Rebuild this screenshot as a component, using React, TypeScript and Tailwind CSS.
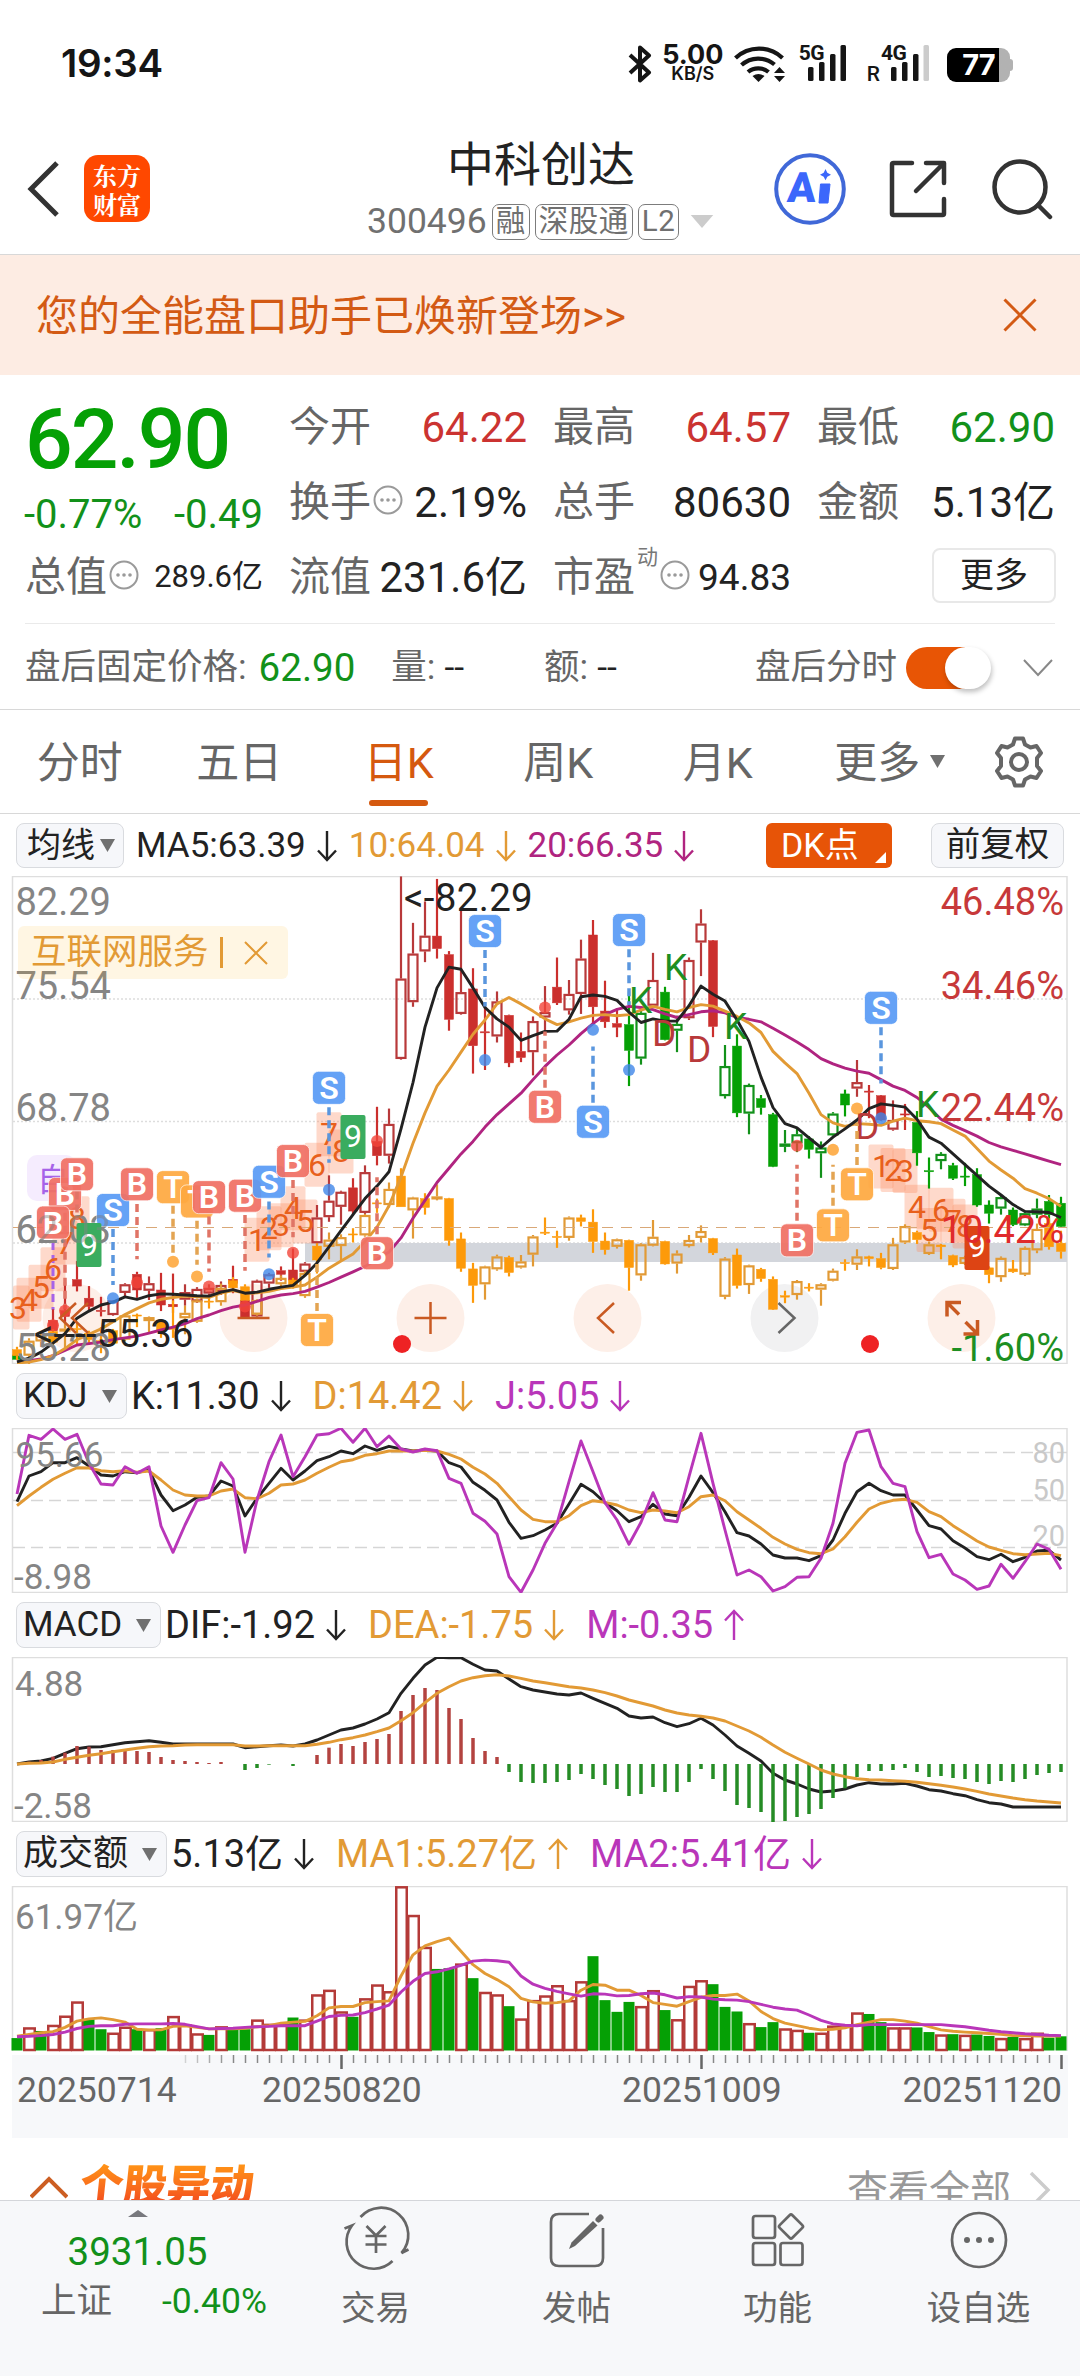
import type { ReactNode } from "react"
import clsx from "clsx"

/* ---------- chart data ---------- */

// one trading day is 12px wide
const dayX = (i: number) => 17 + i * 12
const priceY = (v: number) => 820 + v / 2.8
const indicatorY = (v: number) => 1360 + v / 3
const volumeY = (v: number) => 1820 + v / 2.82

// r / g / a: hollow red, green, amber. Upper case: filled
type Kind = "r" | "R" | "g" | "G" | "a" | "A"
// day, high, body top, body bottom, low
type Candle = [number, number, number, number, number, Kind]

const candleColors: Record<string, string> = { r: "#b8393a", R: "#cb2f2d", g: "#12911a", G: "#05a005", a: "#e29a35", A: "#fd9a0a" }

const sectorCandles: Candle[] = [
  [0, 1475, 1483, 1500, 1512, "A"], [1, 1451, 1458, 1500, 1525, "a"], [2, 1435, 1442, 1460, 1475, "a"],
  [3, 1425, 1432, 1462, 1470, "A"], [4, 1405, 1424, 1426, 1480, "a"], [5, 1405, 1424, 1426, 1470, "A"],
  [6, 1430, 1437, 1455, 1470, "A"], [7, 1420, 1458, 1462, 1493, "A"], [8, 1425, 1430, 1465, 1470, "A"],
  [9, 1385, 1387, 1455, 1460, "a"], [10, 1382, 1386, 1389, 1420, "A"], [11, 1390, 1392, 1403, 1435, "a"],
  [12, 1398, 1402, 1432, 1450, "A"], [13, 1345, 1422, 1426, 1450, "A"], [14, 1360, 1380, 1395, 1440, "a"],
  [15, 1340, 1345, 1405, 1408, "a"], [16, 1335, 1347, 1350, 1368, "A"], [17, 1298, 1310, 1350, 1360, "a"],
  [18, 1280, 1290, 1310, 1318, "A"], [19, 1300, 1307, 1345, 1345, "A"], [20, 1342, 1344, 1385, 1388, "a"],
  [22, 1275, 1282, 1300, 1305, "a"], [23, 1282, 1288, 1303, 1312, "A"], [24, 1262, 1268, 1333, 1338, "a"],
  [25, 1185, 1193, 1232, 1270, "A"], [26, 1155, 1175, 1195, 1230, "a"], [27, 1160, 1168, 1193, 1235, "a"],
  [28, 1143, 1159, 1162, 1183, "A"], [29, 1103, 1106, 1163, 1168, "a"], [30, 1060, 1072, 1075, 1100, "A"],
  [31, 1015, 1033, 1078, 1085, "a"], [32, 975, 997, 1083, 1083, "A"], [33, 1055, 1057, 1093, 1172, "a"],
  [34, 1045, 1060, 1085, 1105, "A"], [35, 1020, 1054, 1061, 1065, "a"], [36, 1058, 1060, 1177, 1192, "A"],
  [37, 1155, 1173, 1255, 1265, "A"], [38, 1240, 1257, 1303, 1352, "A"], [39, 1248, 1250, 1300, 1343, "a"],
  [40, 1217, 1222, 1258, 1262, "a"], [41, 1220, 1225, 1267, 1278, "A"], [42, 1218, 1236, 1253, 1256, "a"],
  [43, 1162, 1166, 1217, 1250, "a"], [44, 1113, 1154, 1157, 1162, "A"], [45, 1150, 1166, 1169, 1198, "A"],
  [46, 1110, 1113, 1170, 1178, "a"], [47, 1105, 1114, 1124, 1138, "A"], [48, 1090, 1126, 1180, 1212, "A"],
  [49, 1155, 1179, 1203, 1217, "A"], [50, 1172, 1174, 1195, 1200, "a"], [51, 1175, 1177, 1253, 1318, "A"],
  [52, 1185, 1188, 1275, 1290, "a"], [53, 1120, 1167, 1192, 1194, "a"], [54, 1178, 1180, 1243, 1245, "A"],
  [55, 1205, 1214, 1242, 1270, "a"], [56, 1162, 1176, 1193, 1197, "a"], [57, 1135, 1151, 1170, 1183, "a"],
  [58, 1170, 1172, 1212, 1218, "A"], [59, 1224, 1228, 1335, 1342, "a"], [60, 1200, 1218, 1303, 1312, "A"],
  [61, 1245, 1247, 1302, 1327, "a"], [62, 1254, 1258, 1284, 1293, "A"], [63, 1278, 1286, 1370, 1372, "A"],
  [64, 1318, 1332, 1336, 1353, "A"], [65, 1288, 1291, 1330, 1343, "a"], [66, 1297, 1308, 1311, 1320, "A"],
  [67, 1297, 1300, 1315, 1360, "a"], [68, 1256, 1262, 1290, 1292, "a"], [69, 1230, 1239, 1242, 1262, "A"],
  [70, 1202, 1222, 1245, 1260, "a"], [71, 1220, 1223, 1228, 1250, "A"], [72, 1212, 1228, 1253, 1258, "A"],
  [73, 1170, 1188, 1257, 1260, "a"], [74, 1132, 1137, 1183, 1187, "a"], [75, 1150, 1155, 1175, 1187, "A"],
  [76, 1180, 1188, 1215, 1218, "a"], [77, 1187, 1190, 1195, 1230, "A"], [78, 1217, 1220, 1246, 1252, "A"],
  [79, 1220, 1224, 1243, 1246, "a"], [81, 1250, 1254, 1273, 1297, "A"], [82, 1222, 1226, 1280, 1293, "a"],
  [83, 1232, 1257, 1265, 1268, "A"], [84, 1194, 1198, 1273, 1277, "a"], [85, 1130, 1145, 1205, 1213, "a"],
  [86, 1115, 1130, 1195, 1203, "A"], [87, 1150, 1185, 1208, 1228, "A"],
]

const stockCandles: Candle[] = [
  [0, 1496, 1498, 1510, 1512, "G"], [3, 1370, 1401, 1430, 1440, "R"], [4, 1293, 1374, 1390, 1410, "R"],
  [5, 1235, 1287, 1305, 1320, "R"], [6, 1305, 1339, 1362, 1372, "R"], [7, 1335, 1373, 1376, 1390, "R"],
  [8, 1344, 1345, 1386, 1388, "r"], [9, 1297, 1300, 1324, 1335, "r"], [10, 1265, 1272, 1316, 1338, "R"],
  [11, 1278, 1297, 1318, 1344, "r"], [12, 1268, 1316, 1358, 1375, "R"], [13, 1270, 1356, 1363, 1380, "R"],
  [14, 1300, 1322, 1343, 1360, "r"], [15, 1308, 1313, 1348, 1352, "r"], [16, 1300, 1310, 1326, 1340, "r"],
  [17, 1292, 1302, 1322, 1330, "r"], [18, 1248, 1286, 1298, 1325, "R"], [19, 1345, 1345, 1393, 1393, "R"],
  [20, 1287, 1290, 1390, 1392, "r"], [21, 1268, 1272, 1298, 1310, "r"], [22, 1250, 1262, 1272, 1290, "R"],
  [23, 1200, 1260, 1288, 1300, "R"], [24, 1238, 1242, 1265, 1267, "r"], [25, 1078, 1113, 1185, 1190, "r"],
  [26, 995, 1066, 1112, 1125, "r"], [27, 1038, 1041, 1083, 1133, "r"], [28, 1003, 1030, 1095, 1105, "R"],
  [29, 967, 986, 1100, 1103, "r"], [30, 803, 900, 940, 967, "R"], [31, 808, 851, 940, 962, "r"],
  [32, 158, 444, 669, 671, "r"], [33, 288, 374, 510, 523, "r"], [34, 228, 324, 368, 398, "r"],
  [35, 165, 325, 360, 388, "R"], [36, 367, 377, 558, 590, "R"], [37, 245, 482, 543, 545, "r"],
  [38, 415, 473, 632, 710, "R"], [39, 520, 593, 596, 700, "R"], [40, 480, 508, 606, 623, "r"],
  [41, 545, 547, 680, 692, "R"], [42, 595, 648, 665, 678, "R"], [43, 550, 563, 650, 715, "r"],
  [44, 465, 538, 553, 600, "r"], [45, 385, 468, 512, 518, "R"], [46, 448, 487, 533, 545, "r"],
  [47, 335, 388, 487, 543, "r"], [48, 280, 322, 523, 570, "R"], [49, 450, 535, 565, 582, "R"],
  [50, 530, 570, 580, 608, "R"], [51, 480, 573, 645, 745, "G"], [52, 530, 540, 668, 685, "g"],
  [53, 372, 448, 520, 522, "r"], [54, 467, 482, 615, 617, "G"], [55, 548, 571, 590, 650, "g"],
  [56, 385, 392, 555, 560, "r"], [57, 250, 290, 343, 437, "r"], [58, 336, 338, 578, 608, "R"],
  [59, 630, 689, 773, 780, "g"], [60, 600, 633, 820, 832, "G"], [61, 738, 742, 822, 880, "g"],
  [62, 770, 780, 805, 825, "G"], [63, 820, 825, 970, 972, "G"], [64, 868, 906, 915, 930, "g"],
  [65, 865, 880, 905, 930, "g"], [66, 885, 893, 922, 948, "G"], [67, 900, 917, 933, 1002, "g"],
  [68, 818, 822, 883, 885, "g"], [69, 755, 767, 798, 830, "G"], [70, 672, 734, 752, 775, "r"],
  [71, 742, 759, 762, 835, "R"], [72, 770, 772, 840, 842, "R"], [73, 785, 840, 867, 870, "r"],
  [74, 795, 823, 826, 868, "R"], [75, 815, 847, 932, 968, "G"], [76, 945, 982, 985, 1032, "G"],
  [77, 930, 935, 955, 978, "g"], [78, 960, 968, 1003, 1008, "G"], [79, 960, 997, 1000, 1025, "G"],
  [80, 975, 993, 1078, 1083, "G"], [81, 1065, 1078, 1101, 1130, "G"], [82, 1050, 1056, 1088, 1105, "g"],
  [83, 1085, 1092, 1133, 1137, "G"], [84, 1098, 1101, 1135, 1137, "g"], [85, 1060, 1088, 1105, 1115, "g"],
  [86, 1050, 1068, 1105, 1130, "G"], [87, 1055, 1073, 1138, 1140, "G"],
]

const ma5 = [
  1517, 1507, 1490, 1465, 1438, 1395, 1375, 1358, 1350, 1335, 1342, 1332, 1327, 1328, 1330, 1332, 1333, 1322, 1315, 1325,
  1322, 1314, 1308, 1303, 1275, 1240, 1195, 1150, 1105, 1060, 1025, 985, 865, 735, 580, 470, 412, 418, 470, 525,
  557, 580, 617, 604, 592, 591, 558, 495, 490, 494, 505, 538, 567, 557, 563, 563, 520, 465, 488, 507,
  560, 620, 720, 805, 850, 862, 890, 917, 888, 865, 840, 808, 795, 799, 804, 838, 888, 905, 935, 965,
  995, 1025, 1050, 1077, 1096, 1097, 1099, 1113,
]
const ma10 = [
  1520, 1518, 1511, 1500, 1480, 1455, 1440, 1425, 1405, 1385, 1368, 1352, 1342, 1337, 1333, 1335, 1337, 1325, 1318, 1325,
  1324, 1320, 1312, 1308, 1302, 1280, 1255, 1235, 1215, 1180, 1140, 1080, 1000, 905, 820, 745, 700, 650, 600, 560,
  515, 497, 515, 535, 557, 573, 565, 555, 547, 545, 548, 545, 532, 522, 530, 537, 525, 517, 521, 535,
  550, 568, 595, 648, 680, 710, 765, 825, 848, 858, 850, 852, 855, 843, 835, 842, 845, 850, 868, 885,
  920, 955, 980, 1003, 1032, 1045, 1060, 1082,
]
const ma20 = [
  1518, 1514, 1509, 1500, 1485, 1470, 1466, 1462, 1455, 1450, 1445, 1437, 1428, 1420, 1410, 1396, 1386, 1374, 1364, 1358,
  1348, 1337, 1330, 1326, 1320, 1308, 1295, 1280, 1265, 1250, 1230, 1210, 1170, 1115, 1065, 1015, 975, 935, 900, 860,
  825, 795, 765, 727, 690, 658, 630, 598, 570, 545, 530, 522, 525, 531, 543, 553, 545, 537, 534, 540,
  553, 558, 565, 583, 602, 622, 643, 668, 683, 695, 703, 709, 727, 745, 757, 777, 805, 838, 855, 870,
  885, 903, 915, 925, 935, 945, 955, 965,
]

const kLine = [
  425, 348, 335, 308, 308, 293, 318, 345, 348, 335, 338, 330, 405, 452, 435, 412, 408, 363, 378, 468,
  415, 370, 325, 360, 333, 302, 290, 273, 281, 258, 271, 259, 267, 273, 270, 273, 308, 321, 367, 391,
  420, 487, 535, 527, 510, 490, 432, 373, 395, 428, 452, 485, 470, 433, 462, 467, 412, 348, 398, 455,
  518, 528, 552, 585, 594, 594, 602, 587, 540, 460, 395, 370, 392, 405, 405, 450, 497, 507, 542, 564,
  590, 599, 583, 605, 592, 573, 571, 600,
]
const dLine = [
  437, 408, 382, 358, 340, 323, 324, 332, 335, 332, 337, 333, 360, 390, 405, 408, 408, 393, 387, 413,
  416, 400, 375, 372, 360, 340, 322, 305, 299, 286, 281, 273, 273, 273, 271, 273, 283, 297, 322, 342,
  370, 410, 450, 478, 485, 485, 467, 437, 422, 427, 435, 450, 458, 450, 453, 458, 440, 410, 405, 422,
  455, 480, 505, 532, 552, 568, 578, 581, 567, 530, 487, 447, 430, 421, 418, 427, 455, 470, 497, 520,
  543, 561, 571, 581, 584, 582, 580, 587,
]
const jLine = [
  402, 226, 238, 207, 238, 223, 310, 372, 375, 320, 340, 320, 498, 577, 495, 422, 413, 308, 357, 577,
  420, 305, 225, 350, 290, 225, 221, 205, 247, 205, 260, 228, 267, 276, 267, 272, 355, 370, 460, 484,
  522, 650, 697, 630, 550, 490, 365, 243, 335, 428, 480, 553, 487, 398, 480, 485, 350, 220, 370, 510,
  645, 630, 650, 693, 680, 652, 650, 595, 490, 310, 217, 210, 320, 370, 380, 515, 593, 583, 642, 660,
  688, 678, 613, 655, 605, 552, 568, 628,
]

const difLine = [
  1212, 1206, 1203, 1195, 1180, 1166, 1161, 1160, 1154, 1148, 1145, 1142, 1147, 1152, 1152, 1152, 1152, 1152, 1152, 1163,
  1160, 1157, 1155, 1158, 1152, 1140, 1125, 1110, 1104, 1092, 1077, 1058, 1000, 955, 915, 892, 893, 893, 913, 930,
  933, 957, 980, 990, 996, 1002, 1005, 999, 1015, 1030, 1045, 1068, 1074, 1071, 1088, 1100, 1091, 1075, 1095, 1125,
  1158, 1180, 1203, 1240, 1260, 1272, 1287, 1296, 1293, 1287, 1275, 1268, 1272, 1272, 1270, 1278, 1289, 1293, 1301, 1307,
  1319, 1328, 1332, 1341, 1341, 1341, 1341, 1341,
]
const deaLine = [
  1212, 1210, 1209, 1206, 1198, 1192, 1186, 1181, 1175, 1170, 1165, 1160, 1158, 1157, 1155, 1154, 1154, 1154, 1154, 1158,
  1158, 1157, 1157, 1157, 1157, 1153, 1147, 1139, 1133, 1125, 1115, 1104, 1082, 1058, 1028, 1000, 980, 963, 953, 947,
  944, 948, 955, 963, 968, 974, 980, 984, 990, 998, 1008, 1020, 1029, 1038, 1050, 1059, 1065, 1069, 1074, 1083,
  1098, 1113, 1132, 1155, 1177, 1195, 1212, 1230, 1242, 1250, 1256, 1259, 1260, 1262, 1264, 1267, 1271, 1276, 1281, 1287,
  1294, 1302, 1308, 1314, 1319, 1323, 1326, 1329,
]
const MACD_ZERO = 1212
const macdBars = [
  1212, 1205, 1200, 1190, 1178, 1158, 1160, 1170, 1170, 1170, 1173, 1176, 1191, 1200, 1203, 1206, 1209, 1206, 1212, 1230,
  1224, 1214, 1212, 1218, 1212, 1185, 1163, 1152, 1158, 1146, 1137, 1122, 1053, 1005, 984, 990, 1044, 1077, 1134, 1173,
  1191, 1236, 1266, 1269, 1269, 1266, 1260, 1242, 1257, 1275, 1287, 1308, 1302, 1281, 1296, 1296, 1266, 1227, 1257, 1293,
  1335, 1344, 1356, 1386, 1383, 1371, 1362, 1347, 1314, 1285, 1251, 1233, 1233, 1230, 1224, 1236, 1251, 1248, 1254, 1257,
  1266, 1272, 1263, 1266, 1257, 1245, 1239, 1236,
]

const VOLUME_ZERO = 650
const volumeBars = [
  615, 585, 595, 578, 552, 512, 562, 590, 600, 583, 590, 590, 587, 553, 577, 602, 606, 582, 592, 590,
  563, 575, 575, 557, 563, 492, 479, 540, 555, 503, 464, 483, 187, 268, 358, 420, 418, 405, 446, 485,
  492, 525, 560, 508, 495, 466, 508, 455, 384, 508, 541, 513, 525, 480, 536, 562, 468, 452, 463, 527,
  540, 573, 584, 570, 588, 592, 600, 600, 580, 577, 543, 547, 570, 585, 585, 585, 598, 605, 604, 606,
  605, 609, 615, 612, 615, 600, 614, 610,
]
const volumeKinds = "grgrrrggrrgrgrrrgrggrrrgrrrrgrrrrrrggrgrrgrrrrrrggggrrgrrrgggrggrrgrrrrggrrggrgrggrgrrgg"
const volMa1 = [
  610, 605, 600, 597, 585, 567, 561, 558, 563, 570, 590, 592, 592, 582, 580, 585, 589, 589, 589, 587,
  583, 580, 573, 570, 568, 552, 530, 526, 526, 515, 512, 510, 440, 380, 355, 343, 333, 370, 408, 433,
  450, 470, 503, 513, 517, 515, 510, 480, 464, 466, 480, 480, 495, 515, 520, 525, 512, 500, 495, 495,
  491, 510, 540, 560, 573, 580, 587, 592, 590, 586, 577, 570, 563, 563, 567, 573, 583, 592, 596, 598,
  600, 602, 604, 608, 608, 609, 609, 609,
]
const volMa2 = [
  611, 610, 608, 605, 598, 588, 582, 580, 580, 576, 575, 575, 575, 574, 576, 583, 589, 588, 587, 585,
  583, 582, 580, 580, 580, 567, 554, 551, 550, 543, 533, 522, 485, 455, 433, 428, 420, 410, 398, 395,
  397, 401, 440, 463, 475, 483, 490, 497, 490, 491, 496, 495, 490, 488, 493, 502, 498, 499, 505, 507,
  508, 512, 520, 528, 533, 536, 550, 565, 575, 579, 580, 577, 577, 577, 577, 577, 577, 577, 580, 583,
  588, 593, 597, 600, 603, 605, 607, 608,
]

// buy / sell / T+0 marks: day, badge centre, dash start, dash end, dot
type Mark = { kind: "B" | "S" | "T"; day: number; y: number; dash?: [number, number]; dot?: number }

const marks: Mark[] = [
  { kind: "B", day: 4, y: 1047, dash: [1100, 1370], dot: 1374 },
  { kind: "B", day: 3, y: 1127, dot: 1415 },
  { kind: "B", day: 5, y: 992, dash: [1040, 1120] },
  { kind: "S", day: 8, y: 1092, dash: [1145, 1302], dot: 1339 },
  { kind: "B", day: 10, y: 1020, dash: [1075, 1230], dot: 1295 },
  { kind: "T", day: 13, y: 1028, dash: [1080, 1212], dot: 1237 },
  { kind: "T", day: 15, y: 1068, dash: [1122, 1245], dot: 1278 },
  { kind: "B", day: 16, y: 1056, dash: [1110, 1265], dot: 1306 },
  { kind: "B", day: 19, y: 1052, dash: [1106, 1262], dot: 1362 },
  { kind: "S", day: 21, y: 1013, dash: [1068, 1225], dot: 1272 },
  { kind: "B", day: 23, y: 955, dash: [1008, 1168], dot: 1212 },
  { kind: "S", day: 26, y: 750, dash: [804, 960], dot: 1035 },
  { kind: "B", day: 30, y: 1213, dash: [1160, 1000], dot: 899 },
  { kind: "T", day: 25, y: 1428, dash: [1375, 1240] },
  { kind: "S", day: 39, y: 311, dash: [364, 522], dot: 672 },
  { kind: "B", day: 44, y: 803, dash: [750, 592], dot: 525 },
  { kind: "S", day: 48, y: 845, dash: [792, 634], dot: 587 },
  { kind: "S", day: 51, y: 308, dash: [362, 518], dot: 700 },
  { kind: "B", day: 65, y: 1177, dash: [1122, 965], dot: 912 },
  { kind: "T", day: 68, y: 1135, dash: [1080, 965], dot: 923 },
  { kind: "T", day: 70, y: 1020, dash: [966, 850], dot: 808 },
  { kind: "S", day: 72, y: 526, dash: [580, 738], dot: 835 },
]

const markColors = {
  B: { badge: "#f17165", dash: "#e07466", dot: "#f2453a" },
  S: { badge: "#5a9cf6", dash: "#5a96de", dot: "#3f86e8" },
  T: { badge: "#fea941", dash: "#e3a452", dot: "#fe9d27" },
}

// nine-turn sequence: day, digit, centre
const sequence: [number, number, number][] = [
  [0, 3, 1365], [1, 4, 1343], [2, 5, 1307], [3, 6, 1258], [4, 7, 1183], [5, 8, 1115],
  [20, 1, 1175], [21, 2, 1143], [22, 3, 1135], [23, 4, 1087], [24, 5, 1124], [25, 6, 965], [26, 7, 880], [27, 8, 928],
  [72, 1, 970], [73, 2, 980], [74, 3, 983], [75, 4, 1083], [76, 5, 1148], [77, 6, 1091], [78, 7, 1122], [79, 8, 1138],
]

const toPoints = (values: number[], scale: (v: number) => number) =>
  values.map((v, i) => `${dayX(i)},${scale(v).toFixed(1)}`).join(" ")

/* ---------- small pieces ---------- */

function Line({ values, scale, color }: { values: number[]; scale: (v: number) => number; color: string }) {
  return <polyline points={toPoints(values, scale)} fill="none" stroke={color} strokeWidth="2.900" strokeLinejoin="round" />
}

function CandleShape({ candle }: { candle: Candle }) {
  const [day, high, top, bottom, low, kind] = candle
  const x = dayX(day)
  const color = candleColors[kind]
  const hollow = kind === kind.toLowerCase()
  const y1 = priceY(top)
  const y2 = priceY(bottom)
  return (
    <g stroke={color} strokeWidth="2.200">
      {top > high && <path d={`M${x} ${priceY(high)}V${y1}`} />}
      {low > bottom && <path d={`M${x} ${y2}V${priceY(low)}`} />}
      {hollow ? (
        <rect x={x - 4.5} y={y1 + 1} width="9" height={Math.max(y2 - y1 - 2, 1)} fill="none" />
      ) : (
        <rect x={x - 4.5} y={y1} width="9" height={Math.max(y2 - y1, 1)} fill={color} strokeWidth="0.5" />
      )}
    </g>
  )
}

function Badge({ mark }: { mark: Mark }) {
  const x = dayX(mark.day)
  const y = priceY(mark.y)
  const colors = markColors[mark.kind]
  return (
    <g>
      {mark.dash && (
        <path
          d={`M${x} ${priceY(mark.dash[0])}V${priceY(mark.dash[1])}`}
          stroke={colors.dash}
          strokeWidth="3.5"
          strokeDasharray="8 5"
        />
      )}
      {mark.dot && <circle cx={x} cy={priceY(mark.dot)} r="6" fill={colors.dot} opacity="0.8" />}
      <rect x={x - 16.5} y={y - 16.5} width="33" height="33" rx="6" fill={colors.badge} stroke="#fff" strokeOpacity="0.7" opacity="0.93" />
      <text x={x} y={y + 11} fontSize="32" fontWeight="600" textAnchor="middle" fill="#fff">
        {mark.kind}
      </text>
    </g>
  )
}

function Caret({ className }: { className?: string }) {
  return (
    <svg viewBox="0 0 15 13" className={clsx("h-[13px] w-[15px] shrink-0", className)} fill="currentColor">
      <path d="M0 0h15L7.5 13z" />
    </svg>
  )
}

function Trend({ up }: { up?: boolean }) {
  return (
    <svg viewBox="0 0 20 32" className="h-8 w-5 shrink-0" fill="none" stroke="currentColor" strokeWidth="2.400">
      {up ? <path d="M10 31V2M1 11.500l9-9.500 9 9.500" /> : <path d="M10 1v29M1 20.500l9 9.500 9-9.500" />}
    </svg>
  )
}

function InfoDot() {
  return (
    <svg viewBox="0 0 30 30" className="h-[30px] w-[30px] shrink-0 text-[#9a9a9a]" fill="none" stroke="currentColor" strokeWidth="2">
      <circle cx="15" cy="15" r="13.500" />
      <g fill="currentColor" stroke="none">
        <circle cx="9" cy="15" r="1.800" />
        <circle cx="15" cy="15" r="1.800" />
        <circle cx="21" cy="15" r="1.800" />
      </g>
    </svg>
  )
}

function Reading({ label, color, up }: { label: string; color: string; up?: boolean }) {
  return (
    <span className={clsx("flex items-center gap-[11px]", color)}>
      {label}
      <Trend up={up} />
    </span>
  )
}

function IndicatorBar({ name, width, children }: { name: string; width: string; children: ReactNode }) {
  return (
    <div className="flex h-16 items-center pl-4 text-[38px]">
      <div className={clsx("flex h-[46px] items-center justify-between rounded-lg border border-[#d9dbdf] bg-[#f6f7fa] pr-[9px] pl-1.5 text-[35px] text-[#222]", width)}>
        {name}
        <Caret className="text-[#707070]" />
      </div>
      <div className="ml-1 flex gap-[22px]">{children}</div>
    </div>
  )
}

/* ---------- page sections ---------- */

function SignalBars({ weak }: { weak?: boolean }) {
  return (
    <svg viewBox="0 0 39 37" className="h-[37px] w-[39px]" fill="#151515">
      <rect x="0" y="23" width="5.500" height="14" rx="1.500" />
      <rect x="11" y="18" width="5.500" height="19" rx="1.500" />
      <rect x="22" y="10" width="5.500" height="27" rx="1.500" />
      <rect x="32.500" y="1" width="5.500" height="36" rx="1.500" fill={weak ? "#ccc" : "#151515"} />
    </svg>
  )
}

function StatusBar() {
  return (
    <div className="flex h-[127px] items-center justify-between pr-[67px] pl-[61px] font-['Inter'] font-semibold text-[#151515]">
      <span className="text-[38.5px] tracking-[-0.3px]">19:34</span>
      <div className="flex h-[38px] items-end">
        <svg viewBox="0 0 24 38" className="h-[38px] w-6" fill="none" stroke="currentColor" strokeWidth="4" strokeLinejoin="round">
          <path d="M2 10l19 17.500L12 35.500V2.500l9 8L2 28" />
        </svg>
        <div className="ml-[11px] flex w-[60px] flex-col items-center">
          <span className="text-[27px] leading-[20px] font-bold">5.00</span>
          <span className="text-[18px] leading-[18px]">KB/S</span>
        </div>
        <svg viewBox="0 0 52 38" className="ml-[11px] h-[38px] w-[52px]" fill="none" stroke="currentColor" strokeWidth="4.200">
          <path d="M1.500 13a34 34 0 0 1 47 0M7.500 20a25 25 0 0 1 33-.5M14 27a16 16 0 0 1 20.500 0" />
          <path d="M18.500 31q6-4 12 0L24.500 37z" fill="currentColor" stroke="none" />
          <path d="M40 28l5.500-6 5.500 6zM40 31l5.500 6 5.500-6z" fill="currentColor" stroke="none" />
        </svg>
        <div className="relative ml-[22px] pb-0.5">
          <SignalBars />
          <span className="absolute -top-px -left-[9px] font-['Roboto'] text-[21px] leading-none font-bold tracking-tight">5G</span>
        </div>
        <span className="ml-[20px] font-['Roboto'] text-[21px] leading-[17px] font-medium">R</span>
        <div className="relative ml-[11px] pb-0.5">
          <SignalBars weak />
          <span className="absolute -top-px -left-[10px] font-['Roboto'] text-[21px] leading-none font-bold tracking-tight">4G</span>
        </div>
        <div className="mb-px ml-[17px] flex items-center">
          <div className="flex h-[34px] w-[63px] items-center justify-center rounded-[9px] bg-linear-to-r from-black from-82% to-[#b2b2b2] to-82% text-[29px] font-bold tracking-[-1px] text-white">
            77
          </div>
          <div className="h-3 w-[3px] rounded-r-full bg-[#b2b2b2]" />
        </div>
      </div>
    </div>
  )
}

const tags = ["融", "深股通", "L2"]

function TitleBar() {
  return (
    <header className="relative flex h-32 items-center border-b border-[#d8d8d8] pb-1 text-[#333]">
      <svg viewBox="0 0 34 56" className="ml-[26px] h-14 w-[34px]" fill="none" stroke="currentColor" strokeWidth="5">
        <path d="M31 2L5 28l26 26" />
      </svg>
      <div className="ml-6 flex h-[67px] w-[66px] flex-col items-center justify-center rounded-[14px] bg-[#ff4800] font-['Noto_Serif_CJK_SC','Noto_Sans_CJK_SC',serif] text-[24px] leading-[29px] font-bold text-white">
        <span>东方</span>
        <span>财富</span>
      </div>
      <div className="ml-[217px] flex w-[341px] flex-col items-start pt-1">
        <h1 className="ml-[80px] text-[47px] leading-[62px] text-[#222]">中科创达</h1>
        <div className="flex h-[52px] items-center gap-[5px] text-[35.5px] whitespace-nowrap text-[#707070]">
          <span>300496</span>
          {tags.map((tag) => (
            <span
              key={tag}
              className="flex h-9 shrink-0 items-center rounded-[7px] border border-[#7c7c7c] px-[3px] text-[29.500px] leading-none tracking-[0.5px]"
            >
              {tag}
            </span>
          ))}
          <Caret className="ml-[7px] w-[22px] scale-x-150 text-[#ccc]" />
        </div>
      </div>
      <div className="ml-auto flex items-center pr-[27px]">
        <svg viewBox="0 0 72 72" className="h-[72px] w-[72px]" fill="none">
          <circle cx="36" cy="36" r="33.800" stroke="#4068d8" strokeWidth="4" />
          <text x="13" y="49.500" fontSize="42" fontWeight="900" fill="#3b67fb" transform="skewX(-4) translate(3 0)">
            A
          </text>
          <path d="M46.500 31h9.500l-2 19h-9z" fill="#3b67fb" stroke="#3b67fb" strokeLinejoin="round" />
          <path d="M51.500 16l1.800 3.700 3.700 2-3.700 2-1.800 3.600-1.800-3.600-3.700-2 3.700-2z" fill="#3b67fb" />
        </svg>
        <svg viewBox="0 0 60 60" className="ml-[42px] h-[60px] w-[60px]" fill="none" stroke="currentColor" strokeWidth="4.500" strokeLinecap="round" strokeLinejoin="round">
          <path d="M24 4H5.500Q4 4 4 5.500v49Q4 56 5.500 56h49q1.500 0 1.500-1.500V40M38 4h18v20M55 5L28 32" />
        </svg>
        <svg viewBox="0 0 62 64" className="ml-[43px] h-16 w-[62px]" fill="none" stroke="currentColor" strokeWidth="4.500">
          <circle cx="29" cy="30" r="25.500" />
          <path d="M47 48l12 12" strokeLinecap="round" />
        </svg>
      </div>
    </header>
  )
}

type Cell = { label: string; value: string; color?: string; info?: boolean; sup?: string; size?: string }

const quoteRows: Cell[][] = [
  [
    { label: "今开", value: "64.22", color: "text-[#cb3331]" },
    { label: "最高", value: "64.57", color: "text-[#cb3331]" },
    { label: "最低", value: "62.90", color: "text-[#12911a]" },
  ],
  [
    { label: "换手", value: "2.19%", info: true },
    { label: "总手", value: "80630" },
    { label: "金额", value: "5.13亿" },
  ],
]

const bottomCells: Cell[] = [
  { label: "总值", value: "289.6亿", info: true, size: "text-[31px]" },
  { label: "流值", value: "231.6亿" },
  { label: "市盈", value: "94.83", info: true, sup: "动", size: "text-[37px]" },
]

function QuoteCell({ cell }: { cell: Cell }) {
  return (
    <div className="flex h-[75px] items-center whitespace-nowrap">
      <span className="text-[41px] text-[#666]">{cell.label}</span>
      {cell.sup && <span className="ml-0.5 self-start pt-[2px] text-[21px] leading-[30px] text-[#777]">{cell.sup}</span>}
      {cell.info && <span className="ml-[2px] pb-1.5"><InfoDot /></span>}
      <span className={clsx("ml-auto", cell.color ?? "text-[#222]", cell.size ?? "text-[42px]")}>{cell.value}</span>
    </div>
  )
}

function Quote() {
  return (
    <section className="px-[25px]">
      <div className="grid h-[249px] grid-cols-4 content-start gap-x-[26px] border-b border-[#eaeaea] pt-[15px]">
        <div className="row-span-2 flex h-[150px] flex-col pt-0.5 text-[#12911a]">
          <span className="text-[84px] leading-[96px] font-medium tracking-[-2px] text-[#05a005]">62.90</span>
          <div className="-ml-px flex justify-between text-[40px] leading-[54px]">
            <span>-0.77%</span>
            <span>-0.49</span>
          </div>
        </div>
        {quoteRows.flat().map((cell) => (
          <QuoteCell key={cell.label} cell={cell} />
        ))}
        {bottomCells.map((cell) => (
          <QuoteCell key={cell.label} cell={cell} />
        ))}
        <div className="flex h-[75px] items-center justify-end pb-1">
          <button className="-mr-px h-[55px] w-[124px] rounded-lg border-2 border-[#e8e8e8] pb-0.5 text-[34px] leading-none text-[#222]">更多</button>
        </div>
      </div>
    </section>
  )
}

function AfterHours() {
  return (
    <div className="flex h-[86px] items-center border-b border-[#d8d8d8] px-[25px] pt-0.5 text-[35.5px] text-[#666]">
      <span>盘后固定价格:</span>
      <span className="ml-[12px] text-[38.5px] text-[#12911a]">62.90</span>
      <span className="ml-[36px]">量:</span>
      <span className="ml-[9px] text-[#222]">--</span>
      <span className="ml-[80px]">额:</span>
      <span className="ml-[9px] text-[#222]">--</span>
      <span className="ml-auto">盘后分时</span>
      <span className="ml-[9px] flex h-[42px] w-[85px] justify-end rounded-full bg-linear-to-r from-[#e85505] from-70% to-white to-70%">
        <span className="h-[42px] w-[46px] rounded-full bg-white shadow-[1px_3px_5px_rgba(0,0,0,0.25)]" />
      </span>
      <svg viewBox="0 0 30 18" className="mr-[2px] ml-[32px] h-[18px] w-[30px]" fill="none" stroke="#888" strokeWidth="2">
        <path d="M1 1l14 15L29 1" />
      </svg>
    </div>
  )
}

const tabs = ["分时", "五日", "日K", "周K", "月K", "更多"]

function Tabs() {
  return (
    <nav className="flex h-[104px] items-center border-b border-[#d8d8d8] text-[43px] text-[#666]">
      {tabs.map((tab) => (
        <div
          key={tab}
          className={clsx("relative flex h-full w-[159.5px] items-center justify-center pt-1", tab === "日K" && "text-[#d5590f]")}
        >
          <span>{tab}</span>
          {tab === "日K" && <span className="absolute bottom-[7px] h-1.5 w-[59px] rounded-full bg-[#d5590f]" />}
          {tab === "更多" && <Caret className="absolute right-[12px] -mt-1 text-[#707070]" />}
        </div>
      ))}
      <svg viewBox="0 0 52 52" className="ml-[36px] h-[52px] w-[52px]" fill="none" stroke="currentColor" strokeWidth="4" strokeLinejoin="round">
        <path d="M22 2.500h8l2 6 5.500 3 6-1.500 4.500 7-4 5v8l4 5-4.500 7-6-1.500-5.500 3-2 6h-8l-2-6-5.500-3-6 1.500-4.500-7 4-5v-8l-4-5 4.500-7 6 1.500 5.500-3z" />
        <circle cx="26" cy="26" r="8" />
      </svg>
    </nav>
  )
}

function MaBar() {
  return (
    <div className="flex h-[62px] items-center pr-4 pl-4 text-[35px]">
      <div className="flex h-[45px] w-[108px] items-center justify-between rounded-lg border border-[#d9dbdf] bg-[#f6f7fa] pr-2 pl-[10px] text-[34px] text-[#222]">
        均线
        <Caret className="text-[#707070]" />
      </div>
      <div className="ml-[12px] flex gap-3 pt-0.5">
        <Reading label="MA5:63.39" color="text-[#222]" />
        <Reading label="10:64.04" color="text-[#e29a35]" />
        <Reading label="20:66.35" color="text-[#b02480]" />
      </div>
      <div className="relative ml-auto flex h-[45px] w-[126px] items-center rounded-md bg-[#e75407] pl-[15px] text-[34px] text-white">
        DK点
        <svg viewBox="0 0 11 11" className="absolute right-1.5 bottom-[5px] h-[11px] w-[11px]" fill="#fff">
          <path d="M11 0v11H0z" />
        </svg>
      </div>
      <div className="ml-[39px] flex h-[45px] w-[133px] items-center justify-center rounded-lg border border-[#d9dbdf] bg-[#f6f7fa] text-[34.5px] text-[#222]">
        前复权
      </div>
    </div>
  )
}

const priceLabels: [string, string, number, string][] = [
  ["82.29", "46.48%", 914.5, "#c7393a"],
  ["75.54", "34.46%", 998.5, "#c7393a"],
  ["68.78", "22.44%", 1120.5, "#c7393a"],
  ["62.03", "10.42%", 1242.5, "#e02a2c"],
  ["55.28", "-1.60%", 1360.5, "#1d8f22"],
]

const dkLetters: [string, number, number][] = [
  ["K", 629, 1013], ["K", 664, 980], ["K", 724, 1039], ["K", 916, 1117],
  ["D", 652, 1045.5], ["D", 687, 1062], ["D", 855, 1138.5],
]

function PriceChart() {
  return (
    <div className="relative h-[488px]">
      <svg viewBox="0 876 1080 488" className="h-[488px] w-full">
        <rect x="12.500" y="876.500" width="1054.500" height="487" fill="none" stroke="#dedede" strokeWidth="1.500" />
        <path d="M13 999H1067M13 1121.500H1067M13 1243H1067" stroke="#ddd" strokeWidth="1.500" strokeDasharray="2 2" />
        <rect x="305" y="1243" width="762" height="19" fill="#d3d6dc" />
        <g fill="#fdefe8">
          <circle cx="76.500" cy="1318" r="34" />
          <circle cx="253.500" cy="1318" r="34" />
          <circle cx="430.500" cy="1318" r="34" />
          <circle cx="607.500" cy="1318" r="34" />
          <circle cx="784.500" cy="1318" r="34" fill="#f1f1f2" />
          <circle cx="961.500" cy="1318" r="34" />
        </g>
        {sequence.map(([day, , y]) => (
          <rect
            key={day}
            x={Math.max(dayX(day) - 12.5, 13)}
            y={priceY(y) - 22}
            width={day === 0 ? 16.5 : 25}
            height="44"
            rx="2"
            fill="#fb8a5c"
            opacity="0.32"
          />
        ))}
        <rect x="27" y="1155" width="49" height="46" rx="10" fill="#f5ecfe" />
        <text x="53" y="1191" fontSize="32" textAnchor="middle" fill="#a663e8">自</text>
        <path d={`M${dayX(3)} 1242V1310`} stroke="#a663e8" strokeWidth="3" strokeDasharray="8 5" />

        {stockCandles.map((candle) => (
          <CandleShape key={candle[0]} candle={candle} />
        ))}
        {sectorCandles.map((candle) => (
          <CandleShape key={candle[0]} candle={candle} />
        ))}
        <path d="M13 1227.500H1067" stroke="#d9a878" strokeWidth="1.200" strokeDasharray="11 8" />
        <Line values={ma20} scale={priceY} color="#b02480" />
        <Line values={ma10} scale={priceY} color="#e29a35" />
        <Line values={ma5} scale={priceY} color="#222" />

        <g fontSize="38" fill="#858585">
          {priceLabels.map(([price, , y]) => (
            <text key={price} x="15.500" y={y}>{price}</text>
          ))}
        </g>
        <g fontSize="32" fill="#e8601c" textAnchor="middle">
          {sequence.map(([day, digit, y]) => (
            <text key={day} x={day === 0 ? 18 : dayX(day)} y={priceY(y) + 11}>{digit}</text>
          ))}
        </g>
        <g fontSize="37">
          {dkLetters.map(([letter, x, y]) => (
            <text key={`${x}`} x={x} y={y} fill={letter === "K" ? "#1d8f22" : "#b8393a"}>{letter}</text>
          ))}
        </g>
        {marks.map((mark) => (
          <Badge key={`${mark.kind}${mark.day}`} mark={mark} />
        ))}
        <g fontSize="32" fill="#fff" textAnchor="middle">
          <rect x="76.500" y="1223" width="25" height="44" rx="2" fill="#3aac5f" />
          <text x="89" y="1256">9</text>
          <rect x="340.500" y="1115" width="25" height="44" rx="2" fill="#3aac5f" />
          <text x="353" y="1147">9</text>
          <rect x="964.500" y="1226" width="25" height="44" rx="2" fill="#dd4414" />
          <text x="977" y="1257">9</text>
        </g>
        <text x="15.500" y="1242.500" fontSize="38" fill="#858585" opacity="0.45">62.03</text>
        <g fontSize="38" textAnchor="end">
          {priceLabels.map(([, change, y, color]) => (
            <text key={change} x="1064" y={y} fill={color}>{change}</text>
          ))}
        </g>
        <text x="404" y="910.500" fontSize="38.500" letterSpacing="0.3" fill="#222">&lt;-82.29</text>
        <text x="34" y="1346.500" fontSize="38" letterSpacing="0.3" fill="#222">&lt;----55.36</text>

        <g fill="none" stroke="#c95a22" strokeWidth="2.500">
          <path d="M76 1303l-16 15 16 15M88 1303l-16 15 16 15" />
          <path d="M237.500 1318h32M414.500 1318h32M430.500 1302v32" />
          <path d="M614 1303l-16 15 16 15" />
          <path d="M778.500 1303l16 15-16 15" stroke="#666" />
          <path d="M961 1302.500h-14v14M947 1302.500l12 12M977.500 1320v14h-14M977.500 1334l-12-12" strokeWidth="3.500" />
        </g>
        <circle cx="402" cy="1344" r="9" fill="#ee2224" />
        <circle cx="870" cy="1344" r="9" fill="#ee2224" />
      </svg>
      <div className="absolute top-[50px] left-[18px] flex h-[53px] w-[270px] items-center rounded-md bg-[#ffb81c]/12 pl-[13px] text-[35.5px] text-[#e29a35]">
        互联网服务
        <span className="ml-[11px] h-[31px] w-[3px] bg-[#e29a35]" />
        <svg viewBox="0 0 24 24" className="ml-[21px] h-6 w-6" fill="none" stroke="currentColor" strokeWidth="2">
          <path d="M1 1l22 22M23 1L1 23" />
        </svg>
      </div>
    </div>
  )
}

function KdjChart() {
  return (
    <svg viewBox="0 1428 1080 165" className="h-[165px] w-full" fontSize="35">
      <rect x="12.500" y="1428.500" width="1054.500" height="164" fill="none" stroke="#dedede" strokeWidth="1.500" />
      <path d="M13 1452.500H1067M13 1500.500H1067M13 1547.500H1067" stroke="#d6d6d6" strokeWidth="1.500" strokeDasharray="12 6" />
      <g fill="#c9c9c9" fontSize="29" textAnchor="end">
        <text x="1065" y="1462.500">80</text>
        <text x="1065" y="1499.500">50</text>
        <text x="1065" y="1546">20</text>
      </g>
      <Line values={kLine} scale={indicatorY} color="#222" />
      <Line values={dLine} scale={indicatorY} color="#e29a35" />
      <Line values={jLine} scale={indicatorY} color="#b936b9" />
      <text x="15.500" y="1466.500" fill="#858585">95.66</text>
      <text x="14" y="1588.500" fill="#858585">-8.98</text>
    </svg>
  )
}

function MacdChart() {
  return (
    <svg viewBox="0 1657 1080 165" className="h-[165px] w-full" fontSize="35">
      <rect x="12.500" y="1657.500" width="1054.500" height="164" fill="none" stroke="#dedede" strokeWidth="1.500" />
      <Line values={difLine} scale={indicatorY} color="#222" />
      {macdBars.map((v, i) => (
        <path
          key={i}
          d={`M${dayX(i)} ${indicatorY(MACD_ZERO)}V${indicatorY(v)}`}
          stroke={v < MACD_ZERO ? "#b34340" : "#258c25"}
          strokeWidth="3.500"
        />
      ))}
      <Line values={deaLine} scale={indicatorY} color="#e29a35" />
      <text x="15" y="1696" fill="#858585">4.88</text>
      <text x="14" y="1817.500" fill="#858585">-2.58</text>
    </svg>
  )
}

function VolumeChart() {
  const base = volumeY(VOLUME_ZERO)
  return (
    <svg viewBox="0 1886 1080 169" className="h-[169px] w-full" fontSize="35">
      <path d="M12.500 2051V1886.500H1067V2051" fill="none" stroke="#dedede" strokeWidth="1.500" />
      <text x="15" y="1929" fill="#858585">61.97亿</text>
      {volumeBars.map((v, i) => {
        const y = volumeY(v)
        return volumeKinds[i] === "g" ? (
          <rect key={i} x={dayX(i) - 5.5} y={y} width="11" height={base - y} fill="#05a005" />
        ) : (
          <rect key={i} x={dayX(i) - 4.75} y={y + 1} width="10.500" height={base - y - 1.5} fill="#fff" stroke="#b43a38" strokeWidth="2.500" />
        )
      })}
      <Line values={volMa1} scale={volumeY} color="#e29a35" />
      <Line values={volMa2} scale={volumeY} color="#b936b9" />
    </svg>
  )
}

function DateAxis() {
  const ticks = Array.from({ length: 74 }, (_, n) => n + 14)
  return (
    <svg viewBox="12 2055 1056 83" className="mx-3 h-[83px] w-[1056px] bg-[#f7f8fa]">
      {ticks.map((i) => {
        const major = i % 30 === 27
        return (
          <path
            key={i}
            d={`M${dayX(i) + 0.5} 2055V${major ? 2069 : 2063}`}
            stroke={major ? "#666" : "#888"}
            strokeWidth={major ? 2.5 : 1.5}
            opacity={Math.min(1, (i - 12) / 6)}
          />
        )
      })}
      <g fontSize="35.500" fill="#666">
        <text x="17" y="2102">20250714</text>
        <text x="262" y="2102">20250820</text>
        <text x="622" y="2102">20251009</text>
        <text x="1062" y="2102" textAnchor="end">20251120</text>
      </g>
    </svg>
  )
}

function Movers() {
  return (
    <div className="flex h-[62px] items-start overflow-hidden pt-[26px]">
      <svg viewBox="0 0 38 38" className="mt-[12px] ml-[30px] h-[38px] w-[38px] shrink-0" fill="none" stroke="#cc5e22" strokeWidth="4">
        <path d="M1 21L19 3l18 18" />
      </svg>
      <span className="ml-[12px] -skew-x-6 bg-linear-to-b from-[#ff9416] to-[#f4511e] to-80% bg-clip-text text-[43.5px] leading-[46px] font-black text-transparent">
        个股异动
      </span>
      <span className="mt-px ml-auto text-[41px] leading-[52px] text-[#999]">查看全部</span>
      <svg viewBox="0 0 22 38" className="mt-[7px] mr-[29px] ml-[18px] h-[38px] w-[22px] shrink-0" fill="none" stroke="#ccc" strokeWidth="3.500">
        <path d="M2 2l17 17L2 36" />
      </svg>
    </div>
  )
}

const navItems: { label: string; icon: ReactNode }[] = [
  {
    label: "交易",
    icon: (
      <>
        <path d="M14.500 7A27 27 0 0 1 55.500 43l7-3.500M46.500 51A27 27 0 0 1 6 15.500L-1.500 18.500" />
        <path d="M20.500 16L30 25.500 39.500 16M30 25.500V43M19.500 26h21M19.500 34.500h21" />
      </>
    ),
  },
  {
    label: "发帖",
    icon: (
      <>
        <path d="M42 4H12q-8 0-8 8v36q0 8 8 8h36q8 0 8-8V18" />
        <path d="M22 39l2.500-6.500L46 11l4.500 4.500L28 36z" fill="currentColor" stroke="none" />
        <path d="M51.500 9.500l2-2" strokeWidth="6" strokeLinecap="round" />
      </>
    ),
  },
  {
    label: "功能",
    icon: (
      <>
        <rect x="5" y="6" width="22" height="22" rx="2.500" />
        <rect x="5" y="33" width="22" height="22" rx="2.500" />
        <rect x="32.500" y="33" width="22" height="22" rx="2.500" />
        <rect x="34" y="7.500" width="18" height="18" rx="2" transform="rotate(45 43 16.500)" />
      </>
    ),
  },
  {
    label: "设自选",
    icon: (
      <>
        <circle cx="30" cy="30" r="27" />
        <g fill="currentColor" stroke="none">
          <circle cx="18" cy="30" r="3" />
          <circle cx="30" cy="30" r="3" />
          <circle cx="42" cy="30" r="3" />
        </g>
      </>
    ),
  },
]

function BottomNav() {
  return (
    <footer className="flex h-[176px] border-t border-[#d4d6da] bg-[#f7f8fa] text-[#666]">
      <div className="flex w-[275px] flex-col items-center pt-[9px] text-[#12911a]">
        <svg viewBox="0 0 20 7" className="h-[7px] w-5" fill="#77787d">
          <path d="M0 7L10 0l10 7z" />
        </svg>
        <span className="mt-2.5 text-[38.5px] leading-[50px]">3931.05</span>
        <div className="flex w-full justify-between pr-[8px] pl-[41px] text-[35.5px] leading-[48px]">
          <span className="text-[#666]">上证</span>
          <span>-0.40%</span>
        </div>
      </div>
      {navItems.map((item) => (
        <div key={item.label} className="flex w-[201px] flex-col items-center pt-[9px]">
          <svg viewBox="0 0 60 60" className="h-[60px] w-[60px] overflow-visible" fill="none" stroke="currentColor" strokeWidth="2.700">
            {item.icon}
          </svg>
          <span className="mt-[13px] text-[34.5px] leading-[50px]">{item.label}</span>
        </div>
      ))}
    </footer>
  )
}

export default function App() {
  return (
    <div className="flex h-[2376px] w-[1080px] flex-col overflow-hidden bg-white font-['Roboto','Noto_Sans_CJK_SC',sans-serif] [&>*]:shrink-0">
      <StatusBar />
      <TitleBar />
      <div className="flex h-[120px] items-center justify-between bg-[#fdece3] pr-[43px] pl-[36px] text-[42px] text-[#d35a14]">
        <span className="pt-[3px]">您的全能盘口助手已焕新登场&gt;&gt;</span>
        <svg viewBox="0 0 34 34" className="h-[34px] w-[34px]" fill="none" stroke="currentColor" strokeWidth="3">
          <path d="M1.500 1.500l31 31M32.500 1.500l-31 31" />
        </svg>
      </div>
      <Quote />
      <AfterHours />
      <Tabs />
      <MaBar />
      <PriceChart />
      <IndicatorBar name="KDJ" width="w-[111px]">
        <Reading label="K:11.30" color="text-[#222]" />
        <Reading label="D:14.42" color="text-[#e29a35]" />
        <Reading label="J:5.05" color="text-[#b936b9]" />
      </IndicatorBar>
      <KdjChart />
      <IndicatorBar name="MACD" width="w-[145px]">
        <Reading label="DIF:-1.92" color="text-[#222]" />
        <Reading label="DEA:-1.75" color="text-[#e29a35]" />
        <Reading label="M:-0.35" color="text-[#b936b9]" up />
      </IndicatorBar>
      <MacdChart />
      <IndicatorBar name="成交额" width="w-[151px]">
        <Reading label="5.13亿" color="text-[#222]" />
        <Reading label="MA1:5.27亿" color="text-[#e29a35]" up />
        <Reading label="MA2:5.41亿" color="text-[#b936b9]" />
      </IndicatorBar>
      <VolumeChart />
      <DateAxis />
      <Movers />
      <BottomNav />
    </div>
  )
}
